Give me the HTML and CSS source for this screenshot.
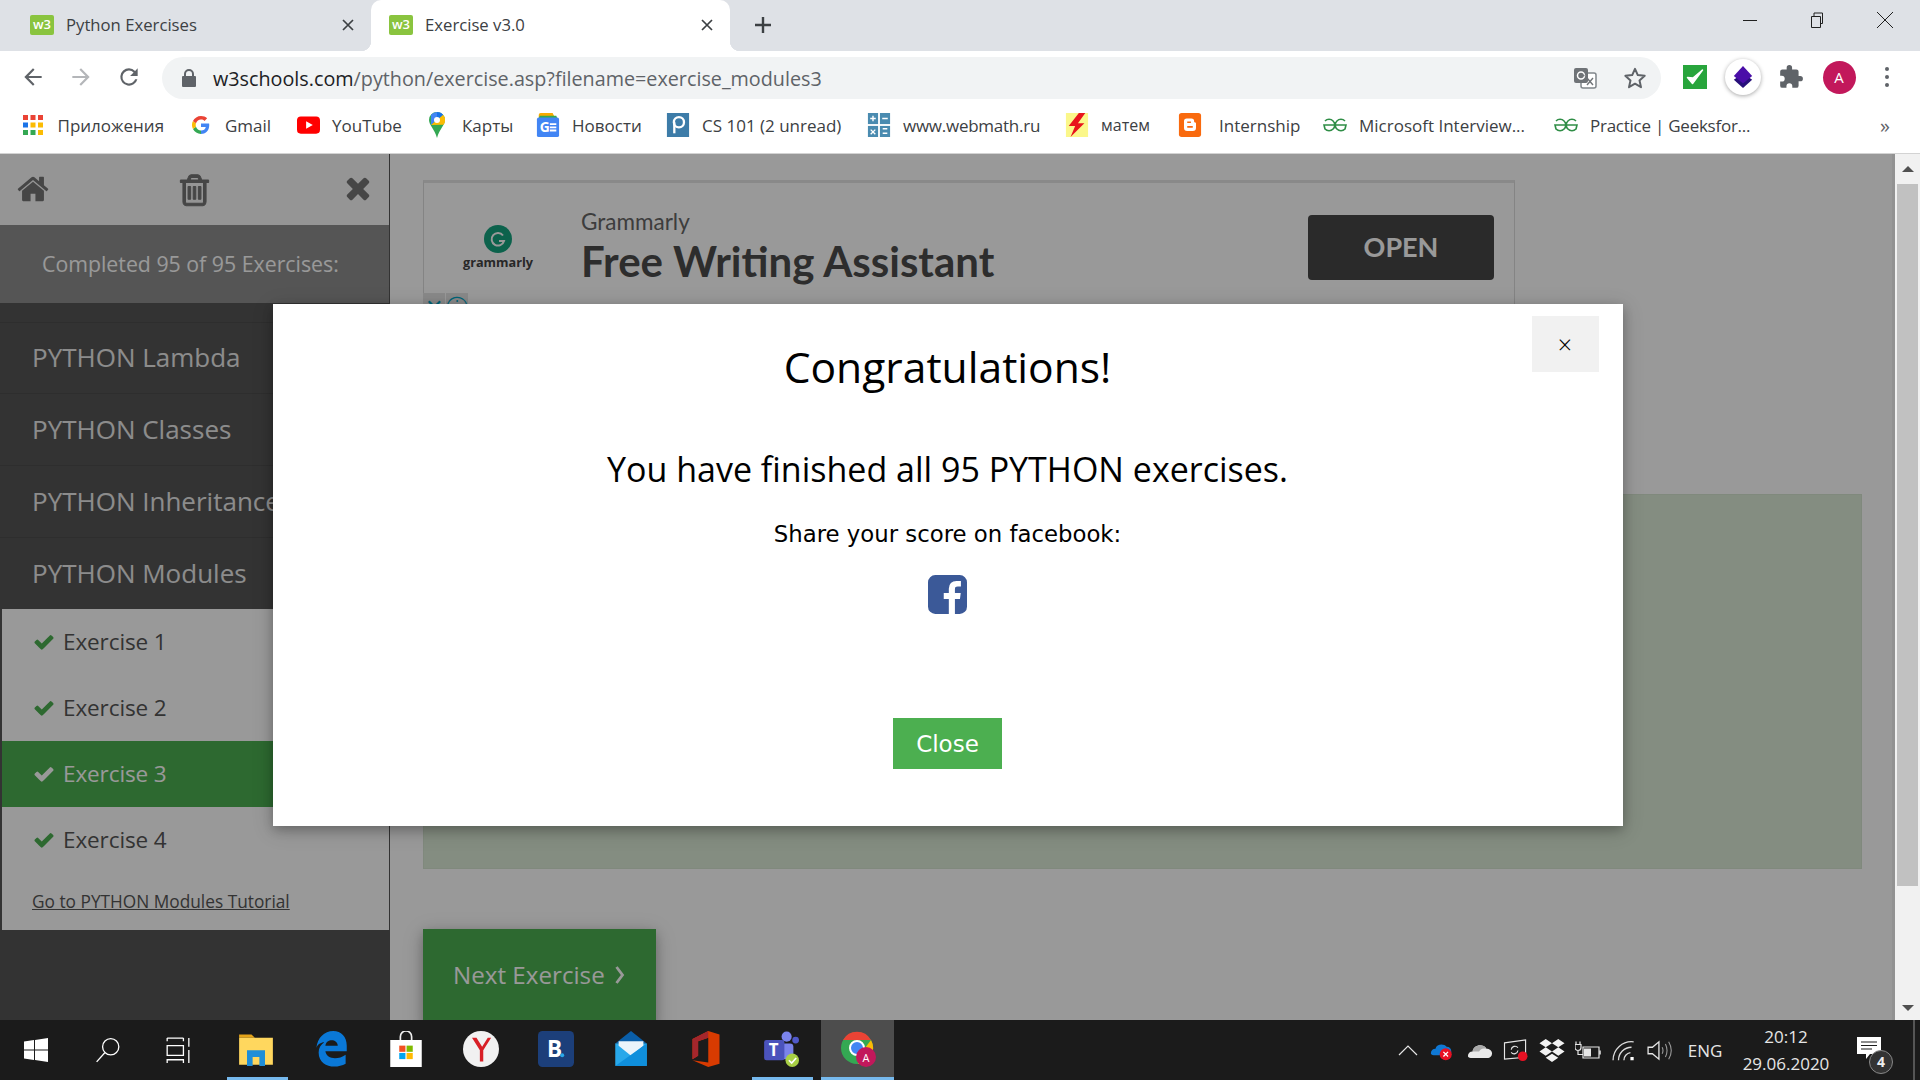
FILE: index.html
```html
<!DOCTYPE html>
<html lang="en">
<head>
<meta charset="utf-8">
<title>Exercise v3.0</title>
<link rel="stylesheet" href="styles.css">
</head>
<body>
<div class="tabstrip">
  <div class="tab first"><span class="fav">w3</span><span class="tab-title">Python Exercises</span><svg class="tab-x" viewBox="0 0 12 12"><path d="M1 1l10 10M11 1L1 11"/></svg></div>
  <div class="tab active"><span class="fav">w3</span><span class="tab-title">Exercise v3.0</span><svg class="tab-x" viewBox="0 0 12 12"><path d="M1 1l10 10M11 1L1 11"/></svg></div>
  <svg class="newtab" viewBox="0 0 18 18"><path d="M9 1v16M1 9h16"/></svg>
  <div class="winctl">
    <svg viewBox="0 0 16 16"><path d="M1 8.500h14"/></svg>
    <svg viewBox="0 0 16 16"><path d="M2.500 4.500h9v11h-9zM5 4.500V1h8.500v10.500h-2"/></svg>
    <svg viewBox="0 0 16 16"><path d="M0 0l16 16M16 0L0 16"/></svg>
  </div>
</div>

<div class="toolbar">
  <div class="navbtn"><svg viewBox="0 0 24 24" class="ico"><path d="M20 11H7.800l5.600-5.600L12 4l-8 8 8 8 1.400-1.400L7.800 13H20z" fill="#5f6368"/></svg></div>
  <div class="navbtn"><svg viewBox="0 0 24 24" class="ico"><path d="M4 11h12.200l-5.600-5.600L12 4l8 8-8 8-1.400-1.400 5.600-5.600H4z" fill="#b4b6b9"/></svg></div>
  <div class="navbtn"><svg viewBox="0 0 24 24" class="ico"><path d="M17.650 6.350A7.950 7.950 0 0 0 12 4a8 8 0 1 0 7.730 10h-2.080A6 6 0 1 1 12 6c1.660 0 3.140.69 4.220 1.780L13 11h7V4z" fill="#5f6368"/></svg></div>
  <div class="omnibox">
    <svg class="lock" viewBox="0 0 16 20"><path d="M3 8V6a5 5 0 0 1 10 0v2h1a1 1 0 0 1 1 1v9a1 1 0 0 1-1 1H2a1 1 0 0 1-1-1V9a1 1 0 0 1 1-1zm2 0h6V6a3 3 0 0 0-6 0z" fill="#5f6368"/></svg>
    <span class="url"><span class="url-host">w3schools.com</span>/python/exercise.asp?filename=exercise_modules3</span>
    <svg class="translate" viewBox="0 0 24 24"><rect x="8" y="7" width="15" height="15" rx="2" fill="#fff" stroke="#80868b" stroke-width="1.500"/><rect x="1" y="2" width="14" height="15" rx="2" fill="#6f7377"/><circle cx="8" cy="9.500" r="3.500" fill="none" stroke="#fff" stroke-width="1.500"/><path d="M8 9.500h3.500M14 12l6 7M20 12l-6 7" stroke="#6f7377" stroke-width="1.400" fill="none"/></svg>
    <svg class="star" viewBox="0 0 24 24"><path d="M12 2.800l2.800 6.300 6.900.7-5.200 4.600 1.500 6.800-6-3.500-6 3.500 1.500-6.800-5.200-4.600 6.900-.7z" fill="none" stroke="#5f6368" stroke-width="2" stroke-linejoin="round"/></svg>
  </div>
  <div class="ext-row">
    <div class="ext"><svg class="ext-check" viewBox="0 0 24 24"><rect width="24" height="24" fill="#28a53c"/><path d="M4.500 12.500l5 6 10-13.500-9.500 8z" fill="#fff" stroke="#fff" stroke-width="1.500" stroke-linejoin="round"/></svg></div>
    <div class="ext"><span class="ext-round"><svg viewBox="0 0 24 24" class="ico-20"><path d="M12 8l10 7-10 9L2 15z" fill="#27107a"/><path d="M12 0l10 11-10 8L2 11z" fill="#4a0ea8"/></svg></span></div>
    <div class="ext"><svg viewBox="0 0 24 24" class="ico"><path d="M20.500 11H19V7a2 2 0 0 0-2-2h-4V3.500a2.500 2.500 0 0 0-5 0V5H4a2 2 0 0 0-2 2v3.800h1.500a2.700 2.700 0 0 1 0 5.400H2V20a2 2 0 0 0 2 2h3.800v-1.500a2.700 2.700 0 0 1 5.400 0V22H17a2 2 0 0 0 2-2v-4h1.500a2.500 2.500 0 0 0 0-5z" fill="#5f6368"/></svg></div>
    <div class="ext"><span class="avatar">A</span></div>
    <div class="ext"><span class="dots"><i></i><i></i><i></i></span></div>
  </div>
</div>

<div class="bookmarks">
  <div class="bm"><svg class="bm-ico i-apps" viewBox="0 0 20 20"><g fill="#ea4335"><rect width="5" height="5"/><rect x="7.500" width="5" height="5"/><rect x="15" width="5" height="5"/></g><g fill="#1a73e8"><rect y="7.500" width="5" height="5"/></g><g fill="#fbbc04"><rect x="7.500" y="7.500" width="5" height="5"/><rect x="15" y="7.500" width="5" height="5"/><rect x="15" y="15" width="5" height="5"/></g><g fill="#34a853"><rect y="15" width="5" height="5"/><rect x="7.500" y="15" width="5" height="5"/></g></svg><span>Приложения</span></div>
  <div class="bm"><svg class="bm-ico i-g" viewBox="0 0 24 24"><path d="M12 10v4.600h6.400c-.6 3-3.100 4.800-6.400 4.800V24c5.800 0 11-4 11-12 0-.7-.1-1.400-.2-2z" fill="#4285f4"/><path d="M5.300 14.300l-4 3.100C3.300 21.300 7.300 24 12 24v-4.600c-3 0-5.700-2-6.700-5.100z" fill="#34a853"/><path d="M1.300 6.600a12 12 0 0 0 0 10.800l4-3.100a7.400 7.400 0 0 1 0-4.600z" fill="#fbbc05"/><path d="M12 4.700c1.900 0 3.500.6 4.700 1.800l3.500-3.500C18.100 1.100 15.300 0 12 0 7.300 0 3.300 2.700 1.300 6.600l4 3.100C6.300 6.700 9 4.700 12 4.700z" fill="#ea4335"/></svg><span>Gmail</span></div>
  <div class="bm"><svg class="bm-ico i-yt" viewBox="0 0 24 18"><rect width="24" height="18" rx="4" fill="#f00"/><path d="M9.500 5l7 4-7 4z" fill="#fff"/></svg><span>YouTube</span></div>
  <div class="bm"><svg class="bm-ico i-maps" viewBox="0 0 16 26"><path d="M8 0a8 8 0 0 1 8 8c0 5-5.500 9-8 18C5.500 17 0 13 0 8a8 8 0 0 1 8-8z" fill="#34a853"/><path d="M2 2.700A8 8 0 0 1 8 0a8 8 0 0 1 6 2.700L2 13z" fill="#4285f4"/><path d="M14 2.700A8 8 0 0 1 14.500 12.700L2 13z" fill="#fbbc04"/><path d="M8 0l4 1 2 1.700-6 5.300z" fill="#1a73e8"/><circle cx="8" cy="8" r="3" fill="#fff"/></svg><span>Карты</span></div>
  <div class="bm"><svg class="bm-ico" viewBox="0 0 24 26"><path d="M2 6V2a2 2 0 0 1 2-2h13l3 6z" fill="#f9ab00"/><path d="M2 6l1-3h18l1 3z" fill="#34a853"/><rect y="5" width="24" height="21" rx="2" fill="#4285f4"/><text x="3" y="21" class="bm-g">G</text><path d="M14 12h7M14 15.500h7M14 19h7" stroke="#fff" stroke-width="2"/></svg><span>Новости</span></div>
  <div class="bm"><svg class="bm-ico" viewBox="0 0 24 26"><rect width="24" height="26" fill="#3d7ca8"/><circle cx="13" cy="10" r="5.500" fill="none" stroke="#fff" stroke-width="2.500"/><path d="M8 10v12" stroke="#fff" stroke-width="2.500"/></svg><span>CS 101 (2 unread)</span></div>
  <div class="bm"><svg class="bm-ico" viewBox="0 0 24 26"><g fill="#4a8bb0"><rect width="11" height="12"/><rect x="13" width="11" height="12"/><rect y="14" width="11" height="12"/><rect x="13" y="14" width="11" height="12"/></g><path d="M5.500 3v6M2.500 6h6M15.500 6h6M16 17h5M16 22h5M3 18l5 5M8 18l-5 5" stroke="#fff" stroke-width="1.500"/></svg><span class="tight">www.webmath.ru</span></div>
  <div class="bm"><svg class="bm-ico i-m" viewBox="0 0 24 26"><rect width="24" height="26" fill="#fbf78a"/><path d="M14 0L3 14h7L5 26l15-15h-7l8-11z" fill="#e8141c"/></svg><span class="small">матем</span></div>
  <div class="bm"><svg class="bm-ico i-b" viewBox="0 0 24 26"><rect width="24" height="26" rx="3" fill="#f96a0e"/><path d="M8.500 6h5a3 3 0 0 1 3 3v1c1.500 0 2 .6 2 1.500V16a3.500 3.500 0 0 1-3.500 3.500H9A3.500 3.500 0 0 1 5.500 16V9a3 3 0 0 1 3-3z" fill="#fff"/><path d="M9 10h4M9 15h6" stroke="#f96a0e" stroke-width="1.800"/></svg><span>Internship</span></div>
  <div class="bm"><svg class="bm-ico" viewBox="0 0 24 16"><path d="M2 4A5.700 5.700 0 1 1 2 12L1 8H23L22 12A5.700 5.700 0 1 1 22 4" fill="none" stroke="#2f8d46" stroke-width="1.600"/></svg><span>Microsoft Interview...</span></div>
  <div class="bm"><svg class="bm-ico" viewBox="0 0 24 16"><path d="M2 4A5.700 5.700 0 1 1 2 12L1 8H23L22 12A5.700 5.700 0 1 1 22 4" fill="none" stroke="#2f8d46" stroke-width="1.600"/></svg><span class="tight">Practice | Geeksfor...</span></div>
  <div class="bm-more">»</div>
</div>

<div class="page">
  <aside class="sidebar">
    <div class="side-top">
      <svg class="side-ico" viewBox="0 0 1792 1792"><path d="M1472 992v480q0 26-19 45t-45 19h-384v-384h-256v384h-384q-26 0-45-19t-19-45v-480q0-1 .5-3t.5-3l575-474 575 474q1 2 1 6zm223-69l-62 74q-8 9-21 11h-3q-13 0-21-7l-692-577-692 577q-12 8-24 7-13-2-21-11l-62-74q-8-10-7-23.500t11-21.500l719-599q32-26 76-26t76 26l244 204v-195q0-14 9-23t23-9h192q14 0 23 9t9 23v408l219 182q10 8 11 21.500t-7 23.500z"/></svg>
      <svg class="side-ico trash" viewBox="0 0 1408 1792"><path d="M512 800v576q0 14-9 23t-23 9h-64q-14 0-23-9t-9-23v-576q0-14 9-23t23-9h64q14 0 23 9t9 23zm256 0v576q0 14-9 23t-23 9h-64q-14 0-23-9t-9-23v-576q0-14 9-23t23-9h64q14 0 23 9t9 23zm256 0v576q0 14-9 23t-23 9h-64q-14 0-23-9t-9-23v-576q0-14 9-23t23-9h64q14 0 23 9t9 23zm128 724v-948h-896v948q0 22 7 40.500t14.500 27 10.500 8.500h832q3 0 10.500-8.500t14.500-27 7-40.500zm-672-1076h448l-48-117q-7-9-17-11h-317q-10 2-17 11zm928 32v64q0 14-9 23t-23 9h-96v948q0 83-47 143.500t-113 60.500h-832q-66 0-113-58.500t-47-141.500v-952h-96q-14 0-23-9t-9-23v-64q0-14 9-23t23-9h309l70-167q15-37 54-63t79-26h320q40 0 79 26t54 63l70 167h309q14 0 23 9t9 23z"/></svg>
      <svg class="side-ico close" viewBox="0 0 1408 1792"><path d="M1298 1202q0 40-28 68l-136 136q-28 28-68 28t-68-28l-294-294-294 294q-28 28-68 28t-68-28l-136-136q-28-28-28-68t28-68l294-294-294-294q-28-28-28-68t28-68l136-136q28-28 68-28t68 28l294 294 294-294q28-28 68-28t68 28l136 136q28 28 28 68t-28 68l-294 294 294 294q28 28 28 68z"/></svg>
    </div>
    <div class="side-progress">Completed 95 of 95 Exercises:</div>
    <div class="side-list">
      <div class="side-row">PYTHON Lambda</div>
      <div class="side-row">PYTHON Classes</div>
      <div class="side-row">PYTHON Inheritance</div>
      <div class="side-row">PYTHON Modules</div>
    </div>
    <div class="side-sub">
      <div class="ex-row"><svg class="check" viewBox="0 0 1792 1792"><path d="M1671 566q0 40-28 68l-724 724-136 136q-28 28-68 28t-68-28l-136-136-362-362q-28-28-28-68t28-68l136-136q28-28 68-28t68 28l294 295 656-657q28-28 68-28t68 28l136 136q28 28 28 68z"/></svg>Exercise 1</div>
      <div class="ex-row"><svg class="check" viewBox="0 0 1792 1792"><path d="M1671 566q0 40-28 68l-724 724-136 136q-28 28-68 28t-68-28l-136-136-362-362q-28-28-28-68t28-68l136-136q28-28 68-28t68 28l294 295 656-657q28-28 68-28t68 28l136 136q28 28 28 68z"/></svg>Exercise 2</div>
      <div class="ex-row current"><svg class="check" viewBox="0 0 1792 1792"><path d="M1671 566q0 40-28 68l-724 724-136 136q-28 28-68 28t-68-28l-136-136-362-362q-28-28-28-68t28-68l136-136q28-28 68-28t68 28l294 295 656-657q28-28 68-28t68 28l136 136q28 28 28 68z"/></svg>Exercise 3</div>
      <div class="ex-row"><svg class="check" viewBox="0 0 1792 1792"><path d="M1671 566q0 40-28 68l-724 724-136 136q-28 28-68 28t-68-28l-136-136-362-362q-28-28-28-68t28-68l136-136q28-28 68-28t68 28l294 295 656-657q28-28 68-28t68 28l136 136q28 28 28 68z"/></svg>Exercise 4</div>
      <a class="tut-link">Go to PYTHON Modules Tutorial</a>
    </div>
  </aside>

  <main class="main">
    <div class="ad">
      <div class="ad-brand"><svg class="ad-logo" viewBox="0 0 28 28"><circle cx="14" cy="14" r="14" fill="#15a37f"/><path d="M19 10.500A6.300 6.300 0 1 0 20 16h-5" fill="none" stroke="#fff" stroke-width="2"/></svg><span class="ad-brandname">grammarly</span></div>
      <div class="ad-copy"><div class="ad-kicker">Grammarly</div><div class="ad-head">Free Writing Assistant</div></div>
      <div class="ad-open">OPEN</div>
      <div class="ad-choices"><span class="ad-chip">✕</span><span class="ad-chip">ⓘ</span></div>
    </div>
    <div class="answer"></div>
    <div class="next">Next Exercise<svg class="chev" viewBox="0 0 10 20"><path d="M2 2l6 8-6 8"/></svg></div>
  </main>

  <div class="scrollbar">
    <svg class="sb-arrow" viewBox="0 0 12 6"><path d="M6 0l6 6H0z"/></svg>
    <div class="sb-track"><div class="sb-thumb"></div></div>
    <svg class="sb-arrow last" viewBox="0 0 12 6"><path d="M6 6l6-6H0z"/></svg>
  </div>

  <div class="overlay">
    <div class="modal">
      <div class="modal-x">×</div>
      <h1 class="m-title">Congratulations!</h1>
      <p class="m-line">You have finished all 95 PYTHON exercises.</p>
      <p class="m-share">Share your score on facebook:</p>
      <svg class="m-fb" viewBox="0 128 1536 1536"><path d="M1248 128q119 0 203.500 84.500t84.500 203.500v960q0 119-84.500 203.500t-203.500 84.500h-188v-595h199l30-232h-229v-148q0-56 23.500-84t91.500-28l122-1v-207q-63-9-178-9-136 0-217.500 80t-81.500 226v171h-200v232h200v595h-532q-119 0-203.500-84.500t-84.500-203.500v-960q0-119 84.500-203.500t203.500-84.500h960z"/></svg>
      <div class="m-close">Close</div>
    </div>
  </div>
</div>

<footer class="taskbar">
  <div class="tb-sys w1"><svg class="tb-win" viewBox="0 0 24 24"><path d="M0 3.500l10-1.400V11.500H0zM11 2l13-2v11.500H11zM0 12.500h10v9.400L0 20.500zM11 12.500h13V24l-13-2z" fill="#fff"/></svg></div>
  <div class="tb-sys w2"><svg class="tb-line" viewBox="0 0 24 24"><circle cx="14.500" cy="9" r="7.500"/><path d="M9 14.500L1.500 23"/></svg></div>
  <div class="tb-sys w3"><svg class="tb-line" viewBox="0 0 24 24"><path d="M2 1h15M2 1v3M17 1v3M2 8h15v9H2zM2 24v-3h15v3M22 1v8M22 12v12"/></svg></div>
  <div class="tb-apps">
    <div class="tb-app on"><div class="tb-in"><svg class="app" viewBox="0 0 32 32"><path d="M1 3h11l3 3H1z" fill="#e5a41a"/><rect x="1" y="6" width="30" height="24" fill="#ffd75e"/><path d="M8 31V17h16v14h-5v-8h-6v8z" fill="#1f8ed8"/></svg></div></div>
    <div class="tb-app"><div class="tb-in"><svg class="app" viewBox="0 0 32 32"><path d="M3 15C4 6 10 0 18 0c7 0 12 5 12 13v5H11c1 7 11 8 18 3v8c-9 5-24 3-24-10 0-4 2-7 5-9-3 0-6 2-7 5zm8-2h11c0-6-10-7-11 0z" fill="#0a78d7"/></svg></div></div>
    <div class="tb-app"><div class="tb-in"><svg class="app" viewBox="0 0 32 32"><path d="M11 8V5a5 5 0 0 1 10 0v3" fill="none" stroke="#eee" stroke-width="1.500"/><rect x="2" y="8" width="28" height="24" fill="#fff"/><rect x="10" y="13" width="5.500" height="5.500" fill="#f25022"/><rect x="16.500" y="13" width="5.500" height="5.500" fill="#7fba00"/><rect x="10" y="19.500" width="5.500" height="5.500" fill="#00a4ef"/><rect x="16.500" y="19.500" width="5.500" height="5.500" fill="#ffb900"/></svg></div></div>
    <div class="tb-app"><div class="tb-in"><svg class="app" viewBox="0 0 32 32"><circle cx="16" cy="16" r="16" fill="#f1f1f1"/><path d="M8 6l7 11v10h3V17l7-11h-3l-5 8-5-8z" fill="#d81f26"/></svg></div></div>
    <div class="tb-app"><div class="tb-in"><svg class="app" viewBox="0 0 32 32"><rect width="32" height="32" rx="4" fill="#1c3f7a"/><text x="8" y="23" class="app-b">B</text><circle cx="21.500" cy="21.500" r="1.800" fill="#2aa8e8"/></svg></div></div>
    <div class="tb-app"><div class="tb-in"><svg class="app" viewBox="0 0 32 32"><path d="M2 11L16 0l14 11z" fill="#0a5ea8"/><path d="M2 11h28v20H2z" fill="#28a8ea"/><path d="M5 9h22v4l-11 9-11-9z" fill="#eaf4fb"/><path d="M30 11v20H2z" fill="#0f8fdc"/></svg></div></div>
    <div class="tb-app"><div class="tb-in"><svg class="app" viewBox="0 0 32 32"><path d="M4 7l14-7 10 3v26l-10 3-14-6 14 2V6L9 9v13l-5 3z" fill="#d83b01"/><path d="M4 7l14-7v6L9 9v13l-5 3z" fill="#a4262c"/></svg></div></div>
    <div class="tb-app on"><div class="tb-in"><svg class="app" viewBox="0 0 32 32"><circle cx="21" cy="5" r="4.500" fill="#7b83eb"/><circle cx="29" cy="8" r="3" fill="#5059c9"/><rect x="15" y="11" width="12" height="14" rx="3" fill="#7b83eb"/><rect x="1" y="8" width="18" height="18" rx="2" fill="#4b53bc"/><text x="5" y="22" class="app-t">T</text><circle cx="26" cy="26" r="6" fill="#a8cf45"/><path d="M23 26l2.500 2.500 4-4.500" stroke="#fff" stroke-width="1.500" fill="none"/></svg></div></div>
    <div class="tb-app on active"><div class="tb-in"><svg class="app" viewBox="0 0 36 36"><circle cx="17" cy="17" r="16" fill="#34a853"/><path d="M3 9a16 16 0 0 1 28 0H17z" fill="#ea4335"/><path d="M31 9a16 16 0 0 1-13 24l7-16z" fill="#fbbc05"/><circle cx="17" cy="17" r="7" fill="#4285f4" stroke="#fff" stroke-width="2"/><circle cx="26" cy="26" r="10" fill="#c2185b"/><text x="22.500" y="30.500" class="app-a">A</text></svg></div></div>
  </div>
  <div class="tray">
    <div class="tr"><svg class="tr-ico" viewBox="0 0 20 12"><path d="M1 11l9-9 9 9" fill="none" stroke="#e6e6e6" stroke-width="1.200"/></svg></div>
    <div class="tr"><svg class="tr-ico big" viewBox="0 0 28 22"><path d="M2 14c0-3 2-5 5-5 1-5 9-6 12-2 3 0 5 2 5 5 0 2-1 4-3 4H5c-2 0-3-1-3-2z" fill="#0f78d4"/><circle cx="18" cy="15" r="6.500" fill="#e81123"/><path d="M15.500 12.500l5 5M20.500 12.500l-5 5" stroke="#fff" stroke-width="1.400"/></svg></div>
    <div class="tr"><svg class="tr-ico big" viewBox="0 0 28 18"><path d="M1 15c0-3 2-5 5-5 1-7 11-9 15-3 3 0 6 2 6 5s-2 5-4 5H4c-2 0-3-1-3-2z" fill="#e9e9e9"/><path d="M6 10c1-7 11-9 15-3-5-1-7 1-8 3z" fill="#a9a9a9"/></svg></div>
    <div class="tr"><svg class="tr-ico big" viewBox="0 0 26 24"><path d="M1 4l22-3v18L1 21z" fill="none" stroke="#e6e6e6" stroke-width="1.200"/><path d="M8 11a4 4 0 0 1 7-2M15 12a4 4 0 0 1-7 2" fill="none" stroke="#e6e6e6" stroke-width="1.200"/><circle cx="20" cy="18" r="5" fill="#e81123"/></svg></div>
    <div class="tr"><svg class="tr-ico big" viewBox="0 0 24 22"><path d="M6 0l6 4-6 4-6-4zM18 0l6 4-6 4-6-4zM6 8l6 4-6 4-6-4zM18 8l6 4-6 4-6-4zM12 14l6 4-6 4-6-4z" fill="#f2f2f2"/></svg></div>
    <div class="tr"><svg class="tr-ico big" viewBox="0 0 26 20"><path d="M1 1v3M5 1v3M0 4h6v3a3 3 0 0 1-6 0zM3 10v4h5" fill="none" stroke="#e6e6e6" stroke-width="1.200"/><path d="M8 6.500h16v11H8z" fill="none" stroke="#e6e6e6" stroke-width="1.200"/><rect x="9" y="8" width="7" height="8" fill="#e6e6e6"/><path d="M25 10v4" stroke="#e6e6e6" stroke-width="1.500"/></svg></div>
    <div class="tr"><svg class="tr-ico big" viewBox="0 0 24 20"><g fill="none" stroke="#dcdcdc" stroke-width="1.200"><path d="M1 19A17 17 0 0 1 20 2"/><path d="M6 19A12 12 0 0 1 18 7"/><path d="M11 19A7 7 0 0 1 17 12"/></g><rect x="17" y="16" width="3" height="3" fill="#fff"/></svg></div>
    <div class="tr"><svg class="tr-ico big" viewBox="0 0 24 20"><path d="M1 7h4l6-5v16l-6-5H1z" fill="none" stroke="#e6e6e6" stroke-width="1.200"/><path d="M14 7c1 2 1 4 0 6M17 4c2 4 2 8 0 12M20 2c3 5 3 11 0 16" fill="none" stroke="#9a9a9a" stroke-width="1"/></svg></div>
    <div class="tr tr-text">ENG</div>
    <div class="tr clock"><span>20:12</span><span>29.06.2020</span></div>
    <div class="tr notify"><svg class="note" viewBox="0 0 24 24"><path d="M0 0h24v17H13l-4 5v-5H0z" fill="#fff"/><path d="M4 5h16M4 8.500h16M4 12h11" stroke="#1c1c1c" stroke-width="1.200"/></svg><span class="note-badge">4</span></div>
    <div class="tr-edge"></div>
  </div>
</footer>
</body>
</html>
```

FILE: styles.css
```css
* { box-sizing: border-box; }
html, body { margin: 0; height: 1080px; overflow: hidden; }
body { display: flex; flex-direction: column; font-family: "Open Sans", "Liberation Sans", sans-serif; background: #fff; }

/* tab strip */
.tabstrip { height: 51px; background: #dee1e6; display: flex; align-items: stretch; padding-left: 8px; flex: none; }
.tab { width: 363px; display: flex; align-items: center; padding-left: 22px; padding-right: 17px; padding-bottom: 2px; position: relative; color: #3c4043; font-size: 16.700px; }
.tab.active { width: 359px; padding-left: 18px; background: #fff; border-radius: 10px 10px 0 0; color: #3c4043; }
.tab.active::before, .tab.active::after { content: ""; position: absolute; bottom: 0; width: 10px; height: 10px; }
.tab.active::before { left: -10px; background: radial-gradient(circle at 0 0, #dee1e6 10px, #fff 10.500px); }
.tab.active::after { right: -10px; background: radial-gradient(circle at 100% 0, #dee1e6 10px, #fff 10.500px); }
.fav { width: 24px; height: 20px; background: #8ac43f; color: #fff; font-size: 13px; font-weight: 600; line-height: 19px; text-align: center; border-radius: 2px; flex: none; }
.tab-title { margin-left: 12px; flex: 1; white-space: nowrap; }
.tab-x { width: 12px; height: 12px; stroke: #3c4043; stroke-width: 1.700; fill: none; flex: none; }
.newtab { width: 18px; height: 18px; stroke: #3c4043; stroke-width: 2.400; fill: none; align-self: center; margin-left: 24px; margin-bottom: 2px; }
.winctl { margin-left: auto; display: flex; align-items: flex-start; padding-top: 12px; padding-right: 27px; gap: 51px; }
.winctl svg { width: 16px; height: 16px; stroke: #202020; stroke-width: 1; fill: none; }
.winctl svg:last-child { margin-left: 1px; }

/* toolbar */
.toolbar { height: 52px; display: flex; align-items: center; padding-left: 9px; flex: none; background: #fff; }
.navbtn { width: 48px; display: flex; justify-content: center; }
.ico { width: 26px; height: 26px; }
.ico-20 { width: 22px; height: 24px; }
.omnibox { width: 1499px; height: 42px; margin-left: 9px; margin-top: 2px; border-radius: 21px; background: #f1f3f4; display: flex; align-items: center; padding-left: 19px; padding-right: 12px; }
.lock { width: 16px; height: 20px; flex: none; }
.url { margin-left: 16px; font-size: 19.760px; color: #5f6368; white-space: nowrap; flex: 1; }
.url-host { color: #202124; }
.translate { width: 24px; height: 24px; margin-right: 26px; }
.star { width: 24px; height: 24px; margin-right: 2px; }
.ext-row { display: flex; margin-left: 10px; }
.ext { width: 48px; display: flex; justify-content: center; align-items: center; }
.ext-check { width: 24px; height: 24px; }
.ext-round { width: 36px; height: 36px; border-radius: 50%; background: #fff; box-shadow: 0 1px 4px rgba(0,0,0,.35); display: flex; align-items: center; justify-content: center; }
.avatar { width: 33px; height: 33px; border-radius: 50%; background: #c2185b; color: #fff; font-size: 15px; display: flex; align-items: center; justify-content: center; }
.dots { display: flex; flex-direction: column; gap: 4px; }
.dots i { display: block; width: 4px; height: 4px; border-radius: 50%; background: #5f6368; }

/* bookmarks */
.bookmarks { height: 51px; flex: none; display: grid; grid-template-columns: 169px 105px 132px 107px 130px 201px 198px 113px 145px 231px 1fr auto; padding: 0 30px 6px 23px; align-items: center; border-bottom: 1px solid #d3d3d3; font-size: 17px; color: #3c4043; }
.bm { display: flex; align-items: center; white-space: nowrap; gap: 12px; }
.bm-ico { width: 24px; height: 24px; flex: none; }
.i-apps { width: 20px; height: 20px; margin-right: 2.500px; }
.i-g { width: 18px; height: 18px; margin-right: 3px; }
.i-yt { width: 23px; height: 18px; }
.i-maps { width: 16px; height: 26px; margin-right: 5px; }
.i-b { margin-right: 5px; }
.bm .small { font-size: 16px; }
.bm .tight { letter-spacing: -.25px; }
.bm-more { color: #5f6368; font-size: 20px; }
.bm-g { font: 700 15px "Open Sans", sans-serif; fill: #fff; }

/* page */
.page { flex: 1; display: flex; position: relative; min-height: 0; }
.sidebar { width: 390px; flex: none; background: #555; border-right: 1px solid #555; display: flex; flex-direction: column; }
.side-top { height: 71px; background: #f8f8f8; display: flex; align-items: center; padding-left: 16px; flex: none; }
.side-ico { width: 34px; height: 34px; fill: #757575; flex: none; margin-bottom: 2px; }
.side-ico.trash { width: 33px; height: 36px; margin-left: 128px; stroke: #757575; stroke-width: 50; }
.side-ico.close { width: 30px; height: 34px; margin-left: 132px; margin-bottom: 0; }
.side-progress { height: 78px; padding-bottom: 1px; background: #8e8e8e; color: #fff; font-size: 21.300px; display: flex; align-items: center; padding-left: 42px; flex: none; }
.side-list { padding-top: 18.500px; flex: none; }
.side-row { height: 71.750px; padding-bottom: 1px; border-top: 1px solid #4d4d4d; color: #eaeaea; font-size: 26px; display: flex; align-items: center; padding-left: 32px; white-space: nowrap; }
.side-sub { margin-left: 2px; background: #fff; display: flex; flex-direction: column; flex: none; height: 321px; }
.ex-row { height: 66px; flex: none; display: flex; align-items: center; padding-left: 31px; gap: 8px; font-size: 22.500px; letter-spacing: -.1px; color: #555; }
.ex-row.current { background: #4caf50; color: #fff; }
.check { width: 22px; height: 24px; fill: #4caf50; flex: none; }
.current .check { fill: #fff; }
.tut-link { margin: 17px 0 0 30px; font-size: 17.300px; color: #555; text-decoration: underline; white-space: nowrap; }

.main { flex: 1; min-width: 0; background: #fff; padding: 26px 30px 0 33px; overflow: hidden; border-right: 3px solid #f4f4f4; }
.ad { width: 1092px; height: 134px; position: relative; border: 1px solid #ddd; border-top: 3px solid #e4e4e4; display: flex; align-items: flex-start; }
.ad-brand { width: 148px; flex: none; padding-top: 42px; display: flex; flex-direction: column; align-items: center; }
.ad-logo { width: 28px; height: 28px; }
.ad-brandname { font-size: 12.700px; font-weight: 700; color: #444; line-height: 16px; margin-top: 1px; }
.ad-copy { padding-top: 25px; margin-left: 9px; }
.ad-kicker { font: 400 22.500px/28px "Lato", sans-serif; color: #666; }
.ad-head { font: 700 42px/50px "Lato", sans-serif; color: #4c4c4c; white-space: nowrap; }
.ad-open { position: absolute; left: 884px; top: 32px; width: 186px; height: 65px; background: #464646; border-radius: 4px; color: #fff; font: 700 27px/63px "Lato", sans-serif; text-align: center; }
.ad-choices { position: absolute; left: -1px; top: 110px; display: flex; gap: 1px; }
.ad-chip { width: 22px; height: 26px; background: #e4e4e4; color: #00a7c8; font-size: 22px; line-height: 26px; text-align: center; }
.answer { width: 1439px; height: 375px; margin-top: 180px; background: #ddecd7; border: 1px solid #d6e5d0; }
.next { width: 233px; height: 100px; margin-top: 60px; padding-bottom: 9px; background: #4caf50; color: #fff; font: 400 24.200px "Open Sans", sans-serif; display: flex; align-items: center; padding-left: 30px; gap: 9px; box-shadow: 0 4px 10px rgba(0,0,0,.2), 0 4px 20px rgba(0,0,0,.19); }
.chev { width: 11px; height: 20px; stroke: #fff; stroke-width: 2.800; fill: none; }

.scrollbar { width: 25px; flex: none; background: #f1f1f1; display: flex; flex-direction: column; align-items: center; position: relative; z-index: 3; }
.sb-arrow { width: 12px; height: 6px; fill: #505050; margin: 12px 0; flex: none; }
.sb-arrow.last { margin-bottom: 9px; }
.sb-track { flex: 1; width: 21px; }
.sb-thumb { height: 702px; background: #c1c1c1; }

.overlay { position: absolute; left: 0; top: 0; right: 25px; bottom: 0; background: rgba(0,0,0,.4); display: flex; justify-content: center; align-items: flex-start; padding-top: 150px; z-index: 2; overflow: hidden; }
.modal { width: 1350px; height: 522px; background: #fff; position: relative; text-align: center; color: #000; padding-top: 33px; box-shadow: 0 4px 10px rgba(0,0,0,.2), 0 4px 20px rgba(0,0,0,.19); display: flex; flex-direction: column; align-items: center; }
.modal-x { position: absolute; right: 24px; top: 12px; width: 67px; height: 56px; background: #f1f1f1; font-size: 25px; font-weight: 300; line-height: 56px; }
.m-title { margin: 0; font-size: 42.600px; line-height: 58px; font-weight: 400; }
.m-line { margin: 49px 0 0; font-size: 34px; line-height: 50px; }
.m-share { margin: 25px 0 0; font: 400 22.800px/30px "DejaVu Sans", Verdana, sans-serif; }
.m-fb { width: 39px; height: 39px; fill: #3b5998; margin-top: 26px; flex: none; }
.m-close { width: 109px; height: 51px; margin-top: 104px; background: #4caf50; color: #fff; font: 400 23px/53px "DejaVu Sans", sans-serif; flex: none; }

/* taskbar */
.taskbar { height: 60px; flex: none; background: #1b1b1b; display: flex; position: relative; z-index: 4; color: #eee; }
.tb-sys { height: 60px; display: flex; align-items: center; justify-content: center; flex: none; }
.w1 { width: 72px; } .w2 { width: 72px; } .w3 { width: 68px; margin-right: 8px; }
.tb-win { width: 24px; height: 24px; }
.tb-line { width: 26px; height: 26px; fill: none; stroke: #fff; stroke-width: 1.200; }
.tb-apps { display: flex; }
.tb-app { width: 75px; display: flex; justify-content: center; }
.tb-in { width: 61px; height: 60px; border-bottom: 3px solid transparent; display: flex; align-items: center; justify-content: center; }
.tb-app.on .tb-in { border-bottom-color: #76b9ed; }
.tb-app.active .tb-in { width: 73px; background: #4d4d4d; }
.app { width: 36px; height: 36px; margin-right: 3px; }
.active .app { margin-right: 0; }
.app-b { font: 700 20px "Open Sans", sans-serif; fill: #fff; }
.app-t { font: 700 15px "Open Sans", sans-serif; fill: #fff; }
.app-a { font: 400 11px "Open Sans", sans-serif; fill: #fff; }
.tray { position: absolute; left: 1391px; top: 0; right: 0; height: 60px; display: grid; grid-template-columns: 34px 34px 42px 30px 42px 30px 44px 26px 64px 98px 70px 15px; }
.tr { display: flex; align-items: center; justify-content: center; position: relative; }
.tr-ico { width: 20px; height: 12px; }
.tr-ico.big { width: 26px; height: 23px; }
.tr-text { font-size: 17px; color: #e6e6e6; }
.clock { flex-direction: column; font-size: 17px; color: #e6e6e6; gap: 4px; line-height: 23px; }
.note { width: 24px; height: 24px; margin-top: -2px; margin-right: 3px; }
.note-badge { position: absolute; left: 34px; top: 30px; width: 24px; height: 24px; border-radius: 50%; background: #333; border: 1px solid #888; font-size: 14px; font-weight: 700; text-align: center; line-height: 22px; color: #eee; }
.tr-edge { border-left: 2px solid #555; margin-left: 8px; }
```
